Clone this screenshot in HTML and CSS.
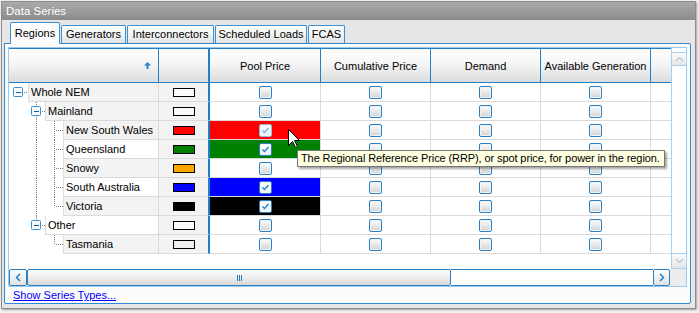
FILE: index.html
```html
<!DOCTYPE html>
<html>
<head>
<meta charset="utf-8">
<title>Data Series</title>
<link rel="stylesheet" href="styles.css">
</head>
<body>
<div class="window">
  <div class="titlebar">Data Series</div>
  <div class="client">
    <div class="tabs">
      <div class="tab active w-reg">Regions</div>
      <div class="tab w-gen">Generators</div>
      <div class="tab w-int">Interconnectors</div>
      <div class="tab w-sch">Scheduled Loads</div>
      <div class="tab w-fcas">FCAS</div>
    </div>
    <div class="panel">
      <div class="grid">
        <div class="gmain">
          <div class="gview">
            <div class="row hdr">
              <div class="h h-tree"><svg width="7" height="7" viewBox="0 0 7 7"><path d="M3.5 0 L7 3.5 H4.5 V7 H2.5 V3.5 H0 Z" fill="#2a86d0"/></svg></div>
              <div class="h h-sw"></div>
              <div class="h">Pool Price</div>
              <div class="h">Cumulative Price</div>
              <div class="h">Demand</div>
              <div class="h">Available Generation</div>
              <div class="h h-last"></div>
            </div>

            <div class="row">
              <div class="tc"><svg class="tl" width="19" height="19"><rect class="exp" x="4.5" y="4.5" width="9" height="9" rx="1"/><path class="minus" d="M7 9.5H12"/><path class="dot" d="M15 9.5H19"/></svg><span class="lbl">Whole NEM</span></div>
              <div class="sc"><span class="sw white"></span></div>
              <div class="c"><span class="cb"></span></div>
              <div class="c"><span class="cb"></span></div>
              <div class="c"><span class="cb"></span></div>
              <div class="c"><span class="cb"></span></div>
              <div class="c last"></div>
            </div>

            <div class="row">
              <div class="tc"><svg class="tl" width="36" height="19"><path class="dot" d="M27.5 0V4"/><rect class="exp" x="22.5" y="4.5" width="9" height="9" rx="1"/><path class="minus" d="M25 9.5H30"/><path class="dot" d="M33 9.5H36M27.5 15V19"/></svg><span class="lbl">Mainland</span></div>
              <div class="sc"><span class="sw white"></span></div>
              <div class="c"><span class="cb"></span></div>
              <div class="c"><span class="cb"></span></div>
              <div class="c"><span class="cb"></span></div>
              <div class="c"><span class="cb"></span></div>
              <div class="c last"></div>
            </div>

            <div class="row">
              <div class="tc"><svg class="tl" width="54" height="19"><path class="dot" d="M27.5 0V19M45.5 0V19M47 9.5H54"/></svg><span class="lbl">New South Wales</span></div>
              <div class="sc"><span class="sw red"></span></div>
              <div class="c bg-red"><span class="cb on hover"><svg width="11" height="11" viewBox="0 0 11 11"><path d="M2.5 5.5 L4.5 7.5 L8.5 3" fill="none" stroke="#7ab4e4" stroke-width="1.3"/></svg></span></div>
              <div class="c"><span class="cb"></span></div>
              <div class="c"><span class="cb"></span></div>
              <div class="c"><span class="cb"></span></div>
              <div class="c last"></div>
            </div>

            <div class="row">
              <div class="tc"><svg class="tl" width="54" height="19"><path class="dot" d="M27.5 0V19M45.5 0V19M47 9.5H54"/></svg><span class="lbl w">Queensland</span></div>
              <div class="sc"><span class="sw green"></span></div>
              <div class="c bg-green"><span class="cb on"><svg width="11" height="11" viewBox="0 0 11 11"><path d="M2.5 5.5 L4.5 7.5 L8.5 3" fill="none" stroke="#1f7fc8" stroke-width="1.3"/></svg></span></div>
              <div class="c"><span class="cb"></span></div>
              <div class="c"><span class="cb"></span></div>
              <div class="c"><span class="cb"></span></div>
              <div class="c last"></div>
            </div>

            <div class="row">
              <div class="tc"><svg class="tl" width="54" height="19"><path class="dot" d="M27.5 0V19M45.5 0V19M47 9.5H54"/></svg><span class="lbl">Snowy</span></div>
              <div class="sc"><span class="sw orange"></span></div>
              <div class="c"><span class="cb"></span></div>
              <div class="c"><span class="cb"></span></div>
              <div class="c"><span class="cb"></span></div>
              <div class="c"><span class="cb"></span></div>
              <div class="c last"></div>
            </div>

            <div class="row">
              <div class="tc"><svg class="tl" width="54" height="19"><path class="dot" d="M27.5 0V19M45.5 0V19M47 9.5H54"/></svg><span class="lbl w">South Australia</span></div>
              <div class="sc"><span class="sw blue"></span></div>
              <div class="c bg-blue"><span class="cb on"><svg width="11" height="11" viewBox="0 0 11 11"><path d="M2.5 5.5 L4.5 7.5 L8.5 3" fill="none" stroke="#1f7fc8" stroke-width="1.3"/></svg></span></div>
              <div class="c"><span class="cb"></span></div>
              <div class="c"><span class="cb"></span></div>
              <div class="c"><span class="cb"></span></div>
              <div class="c last"></div>
            </div>

            <div class="row">
              <div class="tc"><svg class="tl" width="54" height="19"><path class="dot" d="M27.5 0V19M45.5 0V10M47 9.5H54"/></svg><span class="lbl">Victoria</span></div>
              <div class="sc"><span class="sw black"></span></div>
              <div class="c bg-black"><span class="cb on"><svg width="11" height="11" viewBox="0 0 11 11"><path d="M2.5 5.5 L4.5 7.5 L8.5 3" fill="none" stroke="#1f7fc8" stroke-width="1.3"/></svg></span></div>
              <div class="c"><span class="cb"></span></div>
              <div class="c"><span class="cb"></span></div>
              <div class="c"><span class="cb"></span></div>
              <div class="c last"></div>
            </div>

            <div class="row">
              <div class="tc"><svg class="tl" width="36" height="19"><path class="dot" d="M27.5 0V4"/><rect class="exp" x="22.5" y="4.5" width="9" height="9" rx="1"/><path class="minus" d="M25 9.5H30"/><path class="dot" d="M33 9.5H36"/></svg><span class="lbl w">Other</span></div>
              <div class="sc"><span class="sw white"></span></div>
              <div class="c"><span class="cb"></span></div>
              <div class="c"><span class="cb"></span></div>
              <div class="c"><span class="cb"></span></div>
              <div class="c"><span class="cb"></span></div>
              <div class="c last"></div>
            </div>

            <div class="row">
              <div class="tc"><svg class="tl" width="54" height="19"><path class="dot" d="M45.5 0V10M47 9.5H54"/></svg><span class="lbl">Tasmania</span></div>
              <div class="sc"><span class="sw pale"></span></div>
              <div class="c"><span class="cb"></span></div>
              <div class="c"><span class="cb"></span></div>
              <div class="c"><span class="cb"></span></div>
              <div class="c"><span class="cb"></span></div>
              <div class="c last"></div>
            </div>
          </div>
          <div class="vscroll">
            <div class="vbtn up"><svg width="9" height="6" viewBox="0 0 9 6"><path d="M1 5 L4.5 1.5 L8 5" fill="none" stroke="#a8c4dc" stroke-width="1.2"/></svg></div>
            <div class="vbtn down"><svg width="9" height="6" viewBox="0 0 9 6"><path d="M1 1 L4.5 4.5 L8 1" fill="none" stroke="#a8c4dc" stroke-width="1.2"/></svg></div>
          </div>
        </div>
        <div class="hrow">
          <div class="hscroll">
            <div class="hbtn"><svg width="6" height="9" viewBox="0 0 6 9"><path d="M5 1 L1.5 4.5 L5 8" fill="none" stroke="#1f7fc8" stroke-width="1.5"/></svg></div>
            <div class="thumb"><svg width="5" height="6" viewBox="0 0 5 6"><path d="M0.5 0V6M2.5 0V6M4.5 0V6" stroke="#1f7fc8" stroke-width="1"/></svg></div>
            <div class="track"></div>
            <div class="hbtn"><svg width="6" height="9" viewBox="0 0 6 9"><path d="M1 1 L4.5 4.5 L1 8" fill="none" stroke="#1f7fc8" stroke-width="1.5"/></svg></div>
          </div>
          <div class="corner"></div>
        </div>
      </div>
      <div class="linkrow"><a class="link" href="#">Show Series Types...</a></div>
    </div>
  </div>
</div>

<div class="tooltip">The Regional Reference Price (RRP), or spot price, for power in the region.</div>
<svg class="cursor" width="13" height="20" viewBox="0 0 13 20"><path d="M0.5 0.5 V16.5 L4.5 12.5 L7.5 18.5 L9.5 17.5 L6.5 11.5 H11.5 Z" fill="#fff" stroke="#000" stroke-width="1" stroke-linejoin="miter"/></svg>
</body>
</html>
```

FILE: styles.css
```css
* { box-sizing: border-box; }
html, body { margin: 0; padding: 0; }
body {
  width: 699px;
  height: 313px;
  overflow: hidden;
  position: relative;
  background: #f3f3f3;
  font-family: "Liberation Sans", Arial, sans-serif;
  font-size: 11px;
  color: #000;
}
svg { display: block; }

.window {
  margin: 1px 0 0 1px;
  width: 695px;
  height: 308px;
  border: 1px solid #8c8c8c;
  background: #e6e6e6;
  display: flex;
  flex-direction: column;
  box-shadow: 1px 1px 2px rgba(0, 0, 0, 0.35);
}
.titlebar {
  flex: none;
  height: 18px;
  line-height: 18px;
  padding-left: 4px;
  color: #fff;
  font-size: 11.5px;
  background: linear-gradient(#aaaaaa, #8b8b8b);
}
.client {
  flex: 1;
  display: flex;
  flex-direction: column;
  padding: 2px 4px 4px 2px;
}

/* tabs */
.tabs {
  flex: none;
  height: 21px;
  display: flex;
  align-items: flex-end;
  gap: 1px;
  padding-left: 6px;
  position: relative;
  z-index: 1;
}
.tab {
  height: 18px;
  line-height: 16px;
  text-align: center;
  border: 1px solid #3a92d6;
  border-bottom: none;
  border-radius: 2px 2px 0 0;
  background: linear-gradient(#ffffff, #f4f4f4 50%, #e2e2e2);
  white-space: nowrap;
}
.tab.active {
  height: 22px;
  margin-bottom: -1px;
  padding-top: 2px;
  background: #fcfcfc;
}
.w-reg { width: 50px; }
.w-gen { width: 65px; }
.w-int { width: 87px; }
.w-sch { width: 92px; }
.w-fcas { width: 37px; }

/* panel */
.panel {
  flex: none;
  height: 261px;
  border: 1px solid #2f8ad4;
  border-radius: 0 2px 2px 2px;
  background: #fcfcfc;
  padding: 3px 3px 0 3px;
  display: flex;
  flex-direction: column;
}
.grid {
  flex: none;
  height: 240px;
  border: 1px solid #9cc8ea;
  display: flex;
  flex-direction: column;
  background: #fff;
}
.gmain {
  flex: none;
  height: 221px;
  display: flex;
}
.gview {
  width: 662px;
  background: #fff;
}

.row {
  display: grid;
  grid-template-columns: 150px 51px 111px 110px 110px 110px 20px;
  height: 19px;
}
.row.hdr {
  height: 35px;
  border-top: 1px solid #1f7fc8;
  border-bottom: 1px solid #1f7fc8;
}
.h {
  border-right: 1px solid #1f7fc8;
  background: linear-gradient(#ffffff, #f5f5f5 45%, #dcdcdc);
  display: flex;
  align-items: center;
  justify-content: center;
  white-space: nowrap;
}
.h.h-tree { justify-content: flex-end; padding-right: 7px; }
.h.h-sw { border-right-width: 2px; }
.h.h-last { border-right: none; }

/* body cells */
.tc {
  display: flex;
  border-right: 1px solid #dadada;
  background: #fff;
}
.tl { flex: none; }
.tl .dot { stroke: #7c7c7c; stroke-width: 1; stroke-dasharray: 1 1; fill: none; shape-rendering: crispEdges; }
.tl .exp { fill: #f6f9fc; stroke: #3a8fd2; stroke-width: 1; }
.tl .minus { stroke: #1a5c9a; stroke-width: 1; shape-rendering: crispEdges; }
.lbl {
  flex: 1;
  height: 19px;
  line-height: 19px;
  padding-left: 2px;
  background: #f3f3f3;
  border-left: 1px solid #dedede;
  border-bottom: 1px solid #dadada;
  white-space: nowrap;
}
.lbl.w { background: #fff; }

.sc {
  display: flex;
  align-items: center;
  justify-content: center;
  background: #f3f3f3;
  border-right: 2px solid #1f7fc8;
  border-bottom: 1px solid #dadada;
}
.sw {
  width: 22px;
  height: 9px;
  border: 1px solid #000;
}
.sw.white { background: #fafafa; }
.sw.pale { background: #f0f0f0; }
.sw.red { background: #ff0000; }
.sw.green { background: #008000; }
.sw.orange { background: #ffa500; }
.sw.blue { background: #0000ff; }
.sw.black { background: #000; }

.c {
  display: flex;
  align-items: center;
  justify-content: center;
  border-right: 1px solid #dadada;
  border-bottom: 1px solid #dadada;
  background: #fff;
}
.c.last { border-right: none; }
.c.bg-red { background: #ff0000; }
.c.bg-green { background: #008000; }
.c.bg-blue { background: #0000ff; }
.c.bg-black { background: #000; }

.cb {
  width: 13px;
  height: 13px;
  border: 1px solid #2a80c4;
  border-radius: 2px;
  background: linear-gradient(#fbfbfb, #e9e9e9 50%, #d2d2d2);
  box-shadow: inset 0 0 0 1px #f4f4f4;
  display: flex;
  align-items: center;
  justify-content: center;
}
.cb.on { background: linear-gradient(#ffffff, #eef2f6); }
.cb.hover { border-color: #8dbce4; background: linear-gradient(#fdfdfd, #eaf1f8); }

/* scrollbars */
.vscroll {
  width: 15px;
  border-left: 1px solid #a9d1ef;
  background: #fff;
  display: flex;
  flex-direction: column;
  justify-content: space-between;
  padding-top: 4px;
}
.vbtn {
  height: 14px;
  margin-left: -1px;
  width: 16px;
  border: 1px solid #a9d1ef;
  border-radius: 2px;
  background: linear-gradient(#fbfbfb, #e6e6e6);
  display: flex;
  align-items: center;
  justify-content: center;
}
.vbtn.down { height: 16px; }

.hrow {
  flex: none;
  height: 17px;
  display: flex;
}
.hscroll {
  width: 661px;
  display: flex;
}
.hbtn {
  flex: none;
  width: 18px;
  border: 1px solid #2a80c4;
  border-radius: 2px;
  background: linear-gradient(#fdfdfd, #e2e2e2);
  display: flex;
  align-items: center;
  justify-content: center;
}
.hbtn:last-child { width: 17px; }
.thumb {
  flex: none;
  width: 424px;
  border: 1px solid #2a80c4;
  border-radius: 2px;
  background: linear-gradient(#fdfdfd, #eeeeee 50%, #d6d6d6);
  display: flex;
  align-items: center;
  justify-content: center;
}
.track {
  flex: 1;
  border-top: 1px solid #2a80c4;
  border-bottom: 1px solid #2a80c4;
  background: #fff;
}
.corner {
  flex: 1;
  background: #ededed;
}

.linkrow {
  flex: 1;
  padding-left: 5px;
  line-height: 16px;
}
.link {
  color: #0000ff;
  text-decoration: underline;
}

/* overlays */
.tooltip {
  position: absolute;
  left: 297px;
  top: 150px;
  height: 17px;
  line-height: 15px;
  padding: 0 4px 0 3px;
  border: 1px solid #767676;
  background: #ffffe1;
  letter-spacing: -0.1px;
  white-space: nowrap;
  box-shadow: 2px 2px 2px rgba(0, 0, 0, 0.35);
}
.cursor {
  position: absolute;
  left: 288px;
  top: 129px;
}
```
